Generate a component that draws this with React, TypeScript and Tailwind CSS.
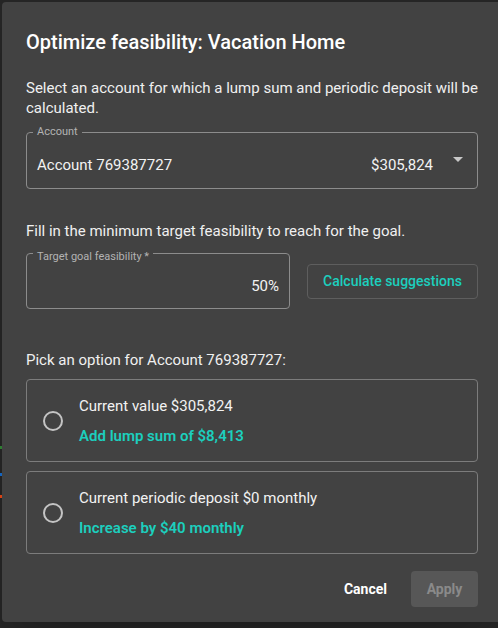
import React from "react";

const teal = "text-[#1ccfbe]";

function OptionCard({ title, action }: { title: string; action: string }) {
  return (
    <div className="mt-[9px] flex h-[83px] items-center rounded-[4px] border border-[#7c7c7c] pl-[16px]">
      <div className="h-[20px] w-[20px] shrink-0 rounded-full border-2 border-[#c4c4c4]" />
      <div className="ml-[16px] flex flex-col gap-[10px]">
        <div className="text-[15px] leading-[20px] text-[#f2f2f2]">{title}</div>
        <div className={`text-[15px] font-semibold leading-[20px] ${teal}`}>{action}</div>
      </div>
    </div>
  );
}

export default function App() {
  return (
    <div
      className="relative h-[628px] w-[498px] overflow-hidden bg-[#262626] pl-[2px] pt-[2px]"
      style={{ fontFamily: "Roboto, 'Noto Sans', sans-serif" }}
    >
      <div className="absolute left-0 top-[446px] h-[3px] w-[2px] bg-[#2e7d32]" />
      <div className="absolute left-0 top-[473px] h-[3px] w-[2px] bg-[#1565c0]" />
      <div className="absolute left-0 top-[495px] h-[3px] w-[2px] bg-[#d84315]" />

      <div className="flex h-[620px] w-[500px] flex-col rounded-[4px] bg-[#424242] px-6 text-white shadow-2xl">
        <h2 className="mt-[26px] text-[20px] font-medium leading-[28px] text-white">
          Optimize feasibility: Vacation Home
        </h2>

        <p className="mt-[22px] text-[15px] leading-[20px] text-[#f0f0f0]">
          Select an account for which a lump sum and periodic deposit will be calculated.
        </p>

        <div className="relative mt-[14px] h-[57px] rounded-[4px] border border-[#8c8c8c]">
          <span className="absolute left-[6px] top-[-7px] bg-[#424242] px-[4px] text-[11px] leading-[12px] text-[#b3b3b3]">
            Account
          </span>
          <div className="flex h-full items-center pl-[10px] pr-[44px] pt-[9px] text-[15px] text-[#f2f2f2]">
            <span className="flex-1">Account 769387727</span>
            <span>$305,824</span>
          </div>
          <div className="absolute right-[14px] top-[24px] h-0 w-0 border-l-[5px] border-r-[5px] border-t-[5px] border-l-transparent border-r-transparent border-t-[#c8c8c8]" />
        </div>

        <p className="mt-[32px] text-[15px] leading-[20px] text-[#f0f0f0]">
          Fill in the minimum target feasibility to reach for the goal.
        </p>

        <div className="mt-[12px] flex items-start">
          <div className="relative h-[56px] w-[264px] rounded-[4px] border border-[#8c8c8c]">
            <span className="absolute left-[6px] top-[-3px] bg-[#424242] px-[4px] text-[11px] leading-[12px] text-[#b3b3b3]">
              Target goal feasibility *
            </span>
            <div className="flex h-full items-center justify-end pr-[10px] pt-[10px] text-[15px] text-[#f2f2f2]">
              50%
            </div>
          </div>
          <button
            className={`ml-[17px] mt-[11px] h-[35px] w-[171px] rounded-[4px] border border-[#5e5e5e] text-[14px] font-medium ${teal}`}
          >
            Calculate suggestions
          </button>
        </div>

        <p className="mt-[41px] text-[15px] leading-[20px] text-[#f0f0f0]">
          Pick an option for Account 769387727:
        </p>

        <OptionCard title="Current value $305,824" action="Add lump sum of $8,413" />
        <OptionCard title="Current periodic deposit $0 monthly" action="Increase by $40 monthly" />

        <div className="mt-[17px] flex items-center justify-end">
          <button className="mr-[24px] text-[14px] font-bold text-white">Cancel</button>
          <button className="h-[36px] w-[67px] rounded-[4px] bg-[#575757] text-[14px] font-bold text-[#8a8a8a]">
            Apply
          </button>
        </div>
      </div>
    </div>
  );
}
